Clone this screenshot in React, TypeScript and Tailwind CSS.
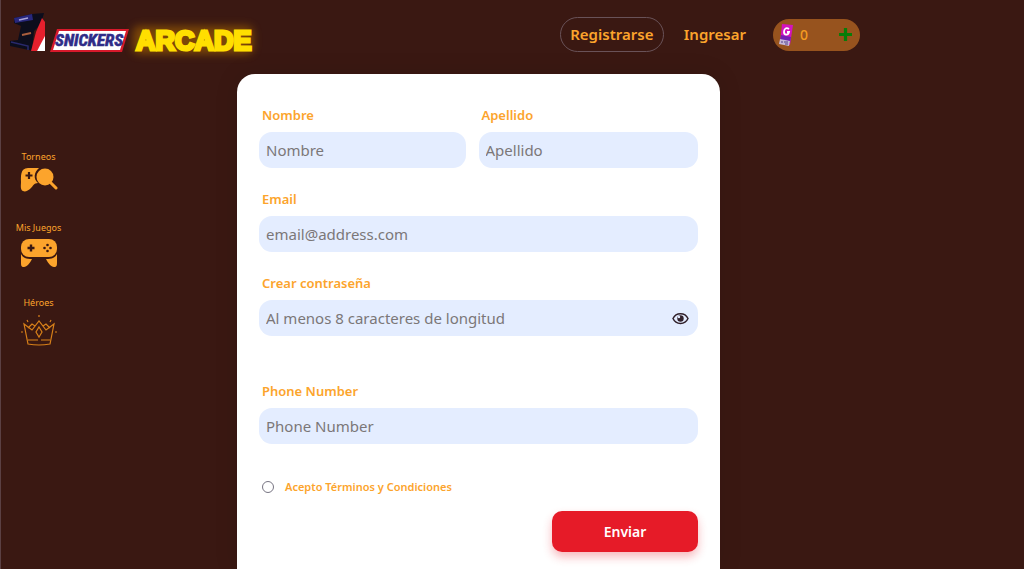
import React from 'react';

interface FieldProps {
  id: string;
  label: string;
  placeholder: string;
  type?: string;
  children?: React.ReactNode;
}

const Field: React.FC<FieldProps> = ({ id, label, placeholder, type = 'text', children }) => {
  return (
    <div className="min-w-0">
      <label htmlFor={id} className="block pl-[3px] mb-[7px] text-[13px] leading-5 font-semibold text-[#fca42c]">
        {label}
      </label>
      <div className="flex items-center h-9 rounded-[13px] bg-[#e4edff] px-[7px]">
        <input
          id={id}
          type={type}
          placeholder={placeholder}
          className="flex-1 min-w-0 bg-transparent text-[15px] leading-6 text-[#3a1812] placeholder:text-[#7b7778] outline-none"
        />
        {children}
      </div>
    </div>
  );
};

const Logo = () => (
  <a href="#" aria-label="Snickers Arcade" className="block">
    <svg width="270" height="64" viewBox="0 0 270 64">
      <defs>
        <filter id="glow" x="-20%" y="-60%" width="140%" height="220%">
          <feGaussianBlur stdDeviation="4" />
        </filter>
      </defs>
      {/* arcade cabinet */}
      <path d="M13 18 L31 14 L43 13 L40 24 L33 31 L31 51 L28 50 L9 46 V41 L17 40 L20 26 L13 23 Z" fill="#0c0d1c" />
      <path d="M13 18 L31 14 L32 20 L14 23 Z" fill="#28277c" />
      <path d="M18 20 L27 18" stroke="#a9a3d8" strokeWidth="1.5" />
      <path d="M21 35 L30 33" stroke="#a95e3d" strokeWidth="2" />
      <path d="M10 42 L27 46 V50" stroke="#29296b" strokeWidth="1.5" fill="none" />
      <path d="M41 18 L44 22 V38 L36 51 H30 L35 32 Z" fill="#e5202d" />
      <path d="M44 36 V51 H36 Z" fill="#fff" />
      {/* wordmarks */}
      <path d="M56 29 H128 L121 52 H49 Z" fill="#d8192b" />
      <path d="M58 31 H125 L119 50 H52 Z" fill="#fff" />
      <text
        x="54"
        y="46"
        fontFamily="'Roboto Condensed', 'Open Sans Condensed', Roboto, sans-serif"
        fontSize="17"
        fontWeight="700"
        fontStyle="italic"
        fill="#2f2b87"
        stroke="#2f2b87"
        strokeWidth="0.6"
      >
        SNICKERS
      </text>
      <rect x="132" y="26" width="120" height="28" rx="6" fill="#a76500" opacity="0.6" filter="url(#glow)" />
      <text
        x="135"
        y="50"
        fontFamily="'Liberation Sans', sans-serif"
        fontSize="27"
        fontWeight="700"
        fill="#ffdf00"
        stroke="#ffdf00"
        strokeWidth="3"
      >
        ARCADE
      </text>
    </svg>
  </a>
);

const CandyIcon = () => (
  <svg width="15" height="24" viewBox="0 0 15 24" aria-hidden="true">
    <path d="M3 1 L14 2 L11 22 L1 20 Z" fill="#d313bd" />
    <path d="M2 12 L12 14 L11 20 L1 19 Z" fill="#7420b4" />
    <path d="M10 6 C7 4 5 6 5 9 C5 12 9 13 10 9 H8" fill="none" stroke="#fff" strokeWidth="1.8" />
    <path d="M1 16 L11 18 L10 23 L0 21 Z" fill="#c5b8d8" />
    <path d="M3 18 V20 M5 19 H9 M6 21 H9" stroke="#51418a" strokeWidth="1" />
  </svg>
);

const TournamentIcon = () => (
  <svg width="38" height="28" viewBox="0 0 38 28" aria-hidden="true">
    <path
      d="M8 1 H19 C14 5 13 12 18 16 C14 16 13 19 11 21 C8 24 5 25 3 24 C0 23 1 18 1 15 C1 10 0 1 8 1 Z"
      fill="#fca42c"
    />
    <path d="M9 5 V12 M5.500 8.500 H12.500" stroke="#3a1812" strokeWidth="2.2" />
    <circle cx="25" cy="10" r="8.500" fill="#fca42c" />
    <path d="M31 16 L36 21" stroke="#fca42c" strokeWidth="3" strokeLinecap="round" />
  </svg>
);

const GamepadIcon = () => (
  <svg width="38" height="32" viewBox="0 0 38 32" aria-hidden="true">
    <path d="M1 16 C3 20 6 21 12 21 C10 25 7 29 4 29 C1 29 1 27 1 24 Z" fill="#fca42c" />
    <path d="M37 16 C35 20 32 21 26 21 C28 25 31 29 34 29 C37 29 37 27 37 24 Z" fill="#fca42c" />
    <rect x="0" y="0" width="38" height="20" rx="10" fill="#3a1812" />
    <rect x="1" y="1" width="36" height="18" rx="8" fill="#fca42c" />
    <path d="M11 6.500 V13.500 M7.500 10 H14.500" stroke="#3a1812" strokeWidth="2.4" />
    <g fill="#3a1812">
      <circle cx="27.500" cy="7" r="1.300" />
      <circle cx="27.500" cy="13" r="1.300" />
      <circle cx="24.500" cy="10" r="1.300" />
      <circle cx="30.500" cy="10" r="1.300" />
    </g>
  </svg>
);

const CrownIcon = () => (
  <svg width="38" height="36" viewBox="0 0 38 36" fill="none" stroke="#d98119" strokeWidth="1.2" aria-hidden="true">
    <path d="M8 31 L4 11 L12 17 L19 8 L26 17 L34 11 L30 31 Q19 33 8 31 Z" />
    <path d="M8 27 H18 M21 27 H30" />
    <path d="M19 14 L22 19 L19 24 L16 19 Z" />
    <path d="M8 15 L12 11 L15 13 M23 13 L26 11 L30 15" />
    <path d="M19 2 V4 M7 7 L8 9 M31 7 L30 9 M1 19 H3 M35 19 H37" />
  </svg>
);

const menu = [
  { label: 'Torneos', icon: <TournamentIcon /> },
  { label: 'Mis Juegos', icon: <GamepadIcon /> },
  { label: 'Héroes', icon: <CrownIcon /> },
];

export default function App() {
  return (
    <div className="min-h-screen flex flex-col bg-[#3a1812] border-l border-[#5b4043] font-['Noto_Sans',sans-serif]">
      <header className="flex items-start justify-between h-[74px] pr-[164px]">
        <Logo />
        <nav className="flex items-center pt-[17px] text-[15px] font-semibold text-[#fca42c]">
          <a href="#" className="flex items-center justify-center h-[35px] w-[104px] rounded-full border border-[#695258]">
            Registrarse
          </a>
          <a href="#" className="ml-5 mr-[27px]">
            Ingresar
          </a>
          <div className="flex items-center h-8 w-[87px] rounded-full bg-[#97531e] pl-1.5 pr-2">
            <CandyIcon />
            <span className="ml-1.5 text-sm font-medium text-[#f59b21]">0</span>
            <button type="button" aria-label="Agregar" className="ml-auto">
              <svg width="13" height="13" viewBox="0 0 13 13">
                <path d="M6.500 0 V13 M0 6.500 H13" stroke="#087d08" strokeWidth="3.200" />
              </svg>
            </button>
          </div>
        </nav>
      </header>

      <div className="flex-1 flex">
        <aside className="w-[75px] pt-[76px] shrink-0">
          <ul className="flex flex-col gap-[26px]">
            {menu.map((item) => (
              <li key={item.label}>
                <a href="#" className="flex flex-col items-center gap-[3px] text-[9px] leading-[14px] text-[#fca42c]">
                  {item.label}
                  {item.icon}
                </a>
              </li>
            ))}
          </ul>
        </aside>

        <main className="flex-1 flex pl-[161px]">
          <form className="w-full max-w-[483px] rounded-t-[18px] bg-white px-[22px] pt-[31px] pb-[17px] shadow-[0_0_24px_rgba(0,0,0,0.1)]">
            <div className="grid grid-cols-[207fr_220fr] gap-[13px]">
              <Field id="nombre" label="Nombre" placeholder="Nombre" />
              <Field id="apellido" label="Apellido" placeholder="Apellido" />
            </div>
            <div className="mt-[21px] flex flex-col gap-[21px]">
              <Field id="email" label="Email" placeholder="email@address.com" type="email" />
              <Field id="password" label="Crear contraseña" placeholder="Al menos 8 caracteres de longitud" type="password">
                <button type="button" aria-label="Mostrar contraseña" className="px-0.5">
                  <svg width="17" height="13" viewBox="0 0 17 13">
                    <path d="M1 6.500 C4 0 13 0 16 6.500 C13 13 4 13 1 6.500 Z" fill="none" stroke="#30202a" strokeWidth="1.500" />
                    <circle cx="8.500" cy="6.500" r="3.200" fill="#30202a" />
                    <circle cx="7" cy="5" r="1.200" fill="#e4edff" />
                  </svg>
                </button>
              </Field>
            </div>
            <div className="mt-[45px]">
              <Field id="phone" label="Phone Number" placeholder="Phone Number" type="tel" />
            </div>
            <div className="mt-[33px] flex items-center gap-[11px] pl-[3px]">
              <input
                id="terms"
                type="radio"
                className="appearance-none size-3 rounded-full border border-[#777482] bg-white checked:bg-[#fca42c]"
              />
              <label htmlFor="terms" className="text-[11px] leading-5 font-semibold text-[#fca42c]">
                Acepto Términos y Condiciones
              </label>
            </div>
            <button
              type="submit"
              className="block ml-auto mt-[14px] h-[41px] w-[146px] rounded-[10px] bg-[#e61b28] text-sm font-semibold text-white shadow-[0_5px_10px_rgba(230,27,40,0.3)]"
            >
              Enviar
            </button>
          </form>
        </main>
      </div>
    </div>
  );
}
